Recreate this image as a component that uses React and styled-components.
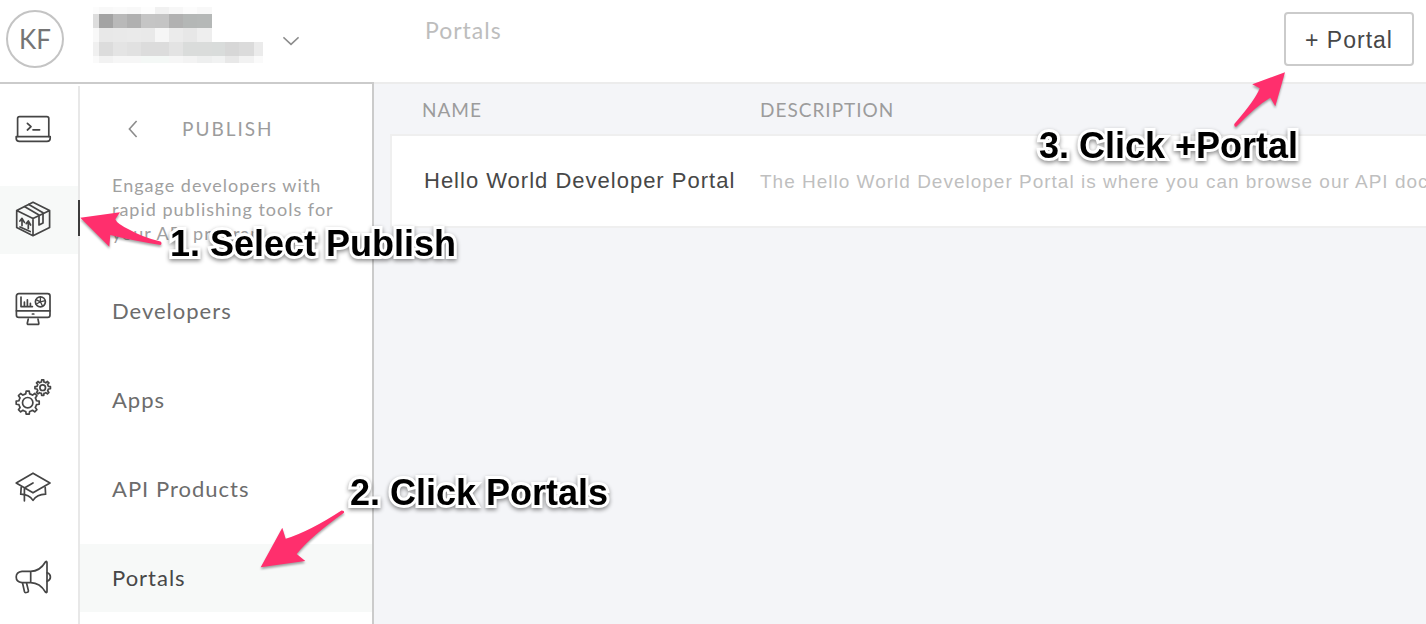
import React from "react";
import styled, { createGlobalStyle } from "styled-components";

const GlobalStyle = createGlobalStyle`
  *, *::before, *::after { box-sizing: border-box; }
  body {
    margin: 0;
    background: #f4f5f8;
    font-family: Lato, "Liberation Sans", sans-serif;
    color: #474747;
  }
  button { font: inherit; color: inherit; background: none; border: 0; padding: 0; cursor: pointer; }
  a { color: inherit; text-decoration: none; }
`;

const Page = styled.div`
  position: relative;
  display: grid;
  grid-template-columns: 374px minmax(0, 1fr);
  grid-template-rows: 84px 1fr;
  min-height: 100vh;
  overflow: hidden;
`;

const AccountBar = styled.header`
  display: flex;
  align-items: flex-start;
  padding: 7px 6px;
  background: #fff;
  border-bottom: 2px solid #cbcbcb;
`;

const Avatar = styled.div`
  display: flex;
  align-items: center;
  justify-content: center;
  width: 58px;
  height: 58px;
  margin-top: 3px;
  border: 2px solid #c4c4c4;
  border-radius: 50%;
  font-size: 26px;
  color: #757575;
`;

const AccountButton = styled.button`
  display: flex;
  align-items: center;
  gap: 20px;
  margin-left: 29px;
  height: 56px;
`;

const DownChevron = styled.svg`
  margin-top: 12px;
`;

const TopBar = styled.header`
  display: flex;
  align-items: flex-start;
  justify-content: space-between;
  padding: 12px 12px 0 51px;
  background: #fff;
  border-bottom: 2px solid #ececec;
`;

const PageTitle = styled.h1`
  margin: 0;
  font-size: 23px;
  line-height: 36px;
  font-weight: 400;
  letter-spacing: 1px;
  color: #bdbdbd;
`;

const AddButton = styled.button`
  height: 54px;
  width: 130px;
  padding-top: 2px;
  border: 2px solid #cbcbcb;
  border-radius: 4px;
  background: #fff;
  font-family: "Liberation Sans", sans-serif;
  font-size: 23px;
  letter-spacing: 1px;
  color: #474747;
`;

const Sidebar = styled.aside`
  display: grid;
  grid-template-columns: 80px 1fr;
  background: #fff;
  border-right: 2px solid #cbcbcb;
`;

const Rail = styled.nav`
  display: flex;
  flex-direction: column;
  gap: 21px;
  margin-top: 2px;
  padding-top: 11px;
  border-right: 2px solid #e8e8e8;
`;

const RailLink = styled.a`
  position: relative;
  display: flex;
  align-items: center;
  height: 68px;
  padding-left: 15px;
  background: ${(p) => (p.$active ? "#f7f9f8" : "transparent")};

  &::after {
    content: "";
    display: ${(p) => (p.$active ? "block" : "none")};
    position: absolute;
    right: -2px;
    top: 14px;
    width: 2px;
    height: 36px;
    background: #3c3c3c;
  }
`;

const Icon = styled.svg`
  width: 36px;
  height: 36px;
  overflow: visible;
  fill: none;
  stroke: #454545;
  stroke-width: 1.7;
  stroke-linecap: round;
  stroke-linejoin: round;
`;

const SubPanel = styled.section`
  display: flex;
  flex-direction: column;
`;

const SubHeader = styled.div`
  display: flex;
  align-items: center;
  gap: 44px;
  height: 89px;
  padding-left: 48px;
`;

const BackButton = styled.button`
  display: flex;
`;

const SubTitle = styled.h2`
  margin: 0;
  font-size: 19px;
  font-weight: 400;
  letter-spacing: 2px;
  color: #9c9c9c;
`;

const SubText = styled.p`
  margin: 0;
  padding: 0 32px;
  font-size: 18px;
  line-height: 24px;
  letter-spacing: 1px;
  color: #a0a0a0;
`;

const Menu = styled.nav`
  display: flex;
  flex-direction: column;
  gap: 21px;
  margin-top: 32px;
`;

const MenuLink = styled.a`
  display: flex;
  align-items: center;
  height: 68px;
  padding: 0 0 2px 32px;
  font-size: 22px;
  letter-spacing: 1px;
  color: ${(p) => (p.$active ? "#474747" : "#6c6c6c")};
  background: ${(p) => (p.$active ? "#f7f9f8" : "transparent")};
`;

const Main = styled.main`
  padding-left: 16px;
  overflow: hidden;
`;

const Table = styled.table`
  width: 100%;
  border-collapse: separate;
  border-spacing: 0;
  table-layout: fixed;
  white-space: nowrap;
`;

const HeadCell = styled.th`
  width: ${(p) => p.$width || "auto"};
  height: 50px;
  padding: ${(p) => (p.$first ? "0 0 0 32px" : "0")};
  text-align: left;
  font-size: 19px;
  font-weight: 400;
  letter-spacing: 1px;
  color: #9c9c9c;
`;

const Cell = styled.td`
  height: 94px;
  padding: 2px 0 0;
  background: #fff;
  border: solid #efefef;
  border-width: 2px 0;
  font-family: "Liberation Sans", sans-serif;
  font-size: 19px;
  letter-spacing: 1px;
  color: #bfbfbf;
`;

const NameCell = styled(Cell)`
  padding: 0 0 0 32px;
  border-left-width: 2px;
  font-size: 22px;
  color: #474747;
`;

const Callout = styled.div`
  position: absolute;
  top: ${(p) => p.$top}px;
  left: ${(p) => p.$left};
  right: ${(p) => p.$right};
  font-family: "Liberation Sans", sans-serif;
  font-size: 36px;
  line-height: 40px;
  font-weight: 700;
  white-space: nowrap;
  color: #000;
  -webkit-text-stroke: 6px #fff;
  stroke-linejoin: round;
  paint-order: stroke fill;
  filter: drop-shadow(0 2px 2px rgba(0, 0, 0, 0.45));
  pointer-events: none;
`;

const Arrow = styled.svg`
  position: absolute;
  top: ${(p) => p.$top}px;
  left: ${(p) => p.$left};
  right: ${(p) => p.$right};
  overflow: visible;
  fill: #ff2f6d;
  filter: drop-shadow(0 2px 1px rgba(0, 0, 0, 0.35));
  pointer-events: none;
`;

const xs = [0, 6, 20, 34, 48, 62, 76, 90, 104, 119, 132, 146, 161, 170];
const mosaicRows = [
  { y: 0, h: 7, c: ["fcfcfc", "f8f8f8", "fafafa", "f8f8f8", "fdfdfd", "f1f1f1", "f7f7f7", "fcfcfc", "f8f8f8"] },
  { y: 7, h: 14, c: ["dddddd", "a3a3a3", "b9b9b9", "b0b0b0", "c5c5c5", "c4c4c4", "b1b1b1", "b4b7b6", "b5b8b7"] },
  { y: 21, h: 14, c: ["f8f8f8", "e8e8e8", "e9e9e9", "eaeaea", "e9e9e9", "f6f6f6", "ebebeb", "e7e7e7", "eeeeee"] },
  { y: 35, h: 14, c: ["f0f0f0", "dcdcdc", "e4e4e4", "e1e1e1", "dcdcdc", "dcdcdc", "e3e3e3", "dadcdb", "dadcdb", "d9dcdb", "d7d7d7", "dbdbdb", "ebebeb"] },
  { y: 49, h: 7, c: ["fafafa", "f2f2f2", "f6f6f6", "f6f6f6", "f4f8f6", "f4f8f6", "f6f6f6", "f3f3f3", "eeefef", "f1f2f2", "e8e8e8", "f2f2f2", "fafafa"] },
];

function Mosaic() {
  return (
    <svg width="170" height="56" shapeRendering="crispEdges" aria-hidden="true">
      {mosaicRows.map((row) =>
        row.c.map((c, i) => (
          <rect key={`${row.y}-${i}`} x={xs[i]} y={row.y} width={xs[i + 1] - xs[i]} height={row.h} fill={`#${c}`} />
        ))
      )}
    </svg>
  );
}

function gearPath(cx, cy, inner, outer, teeth) {
  const step = (Math.PI * 2) / teeth;
  const at = (r, a) => `${(cx + r * Math.cos(a)).toFixed(2)} ${(cy + r * Math.sin(a)).toFixed(2)}`;
  let d = "";
  for (let i = 0; i < teeth; i++) {
    const a = i * step - Math.PI / 2;
    d += `${i ? "L" : "M"}${at(inner, a - step * 0.28)}L${at(outer, a - step * 0.17)}`;
    d += `L${at(outer, a + step * 0.17)}L${at(inner, a + step * 0.28)}`;
    d += `A${inner} ${inner} 0 0 1 ${at(inner, a + step * 0.72)}`;
  }
  return `${d}Z`;
}

const railItems = [
  {
    label: "Develop",
    art: (
      <>
        <path d="M2.6 23.4V5.6Q2.6 3.6 4.6 3.6H31.8Q33.8 3.6 33.8 5.6V23.4" />
        <path d="M1.2 23.6H35.2V25.2Q35.2 28.4 32 28.4H4.4Q1.2 28.4 1.2 25.2Z" />
        <path d="M12.4 10.4L16 13.7L12.4 17M18 16.8H24.6" />
      </>
    ),
  },
  {
    label: "Publish",
    active: true,
    art: (
      <>
        <path d="M18 .3L34.6 8.6V25.6L18 33.7L1.7 25.6V8.6ZM1.7 8.6L18 16.4L34.6 8.6M18 16.4V33.7" />
        <path d="M9.8 4.7L24 13V23L28 21V10.8L13.8 2.4" />
        <path d="M4.9 19L7 16.4L9.4 20.4M7 16.6V23.6M11.2 21.6L13.3 19L15.6 23M13.3 19.2V26.4M5 25L15.2 29.6" />
      </>
    ),
  },
  {
    label: "Analyze",
    art: (
      <>
        <rect x="1.4" y="2.6" width="33.6" height="23.8" rx="2.4" />
        <path d="M1.4 19.8H35M17.4 23H18.8M13.2 28.2L12.3 32.2Q12.2 33.4 13.4 33.4H22.8Q24 33.4 23.8 32.2L23 28.2" />
        <path d="M6 6V15.6H17.4M9.4 15.4V11.2M12.4 15.4V8.8M15.4 15.4V12.4" />
        <circle cx="25.4" cy="10.8" r="5" />
        <path d="M25.4 5.8V10.8L21 13.2M25.4 10.8L30.2 9.6M25.4 10.8L27.6 15.2M21 8.6L25.4 10.8" strokeWidth="1.3" />
      </>
    ),
  },
  {
    label: "Admin",
    art: (
      <>
        <path d={gearPath(12.7, 22.7, 9, 11.6, 8)} />
        <circle cx="12.7" cy="22.7" r="5.2" />
        <path d={gearPath(27.7, 7.7, 5.8, 7.8, 8)} />
        <circle cx="27.7" cy="7.7" r="2.8" />
      </>
    ),
  },
  {
    label: "Learn",
    art: (
      <>
        <path d="M18 4.2L35 14L18 23.8L1.2 14ZM18 14L9.4 19V31.8" />
        <path d="M6.2 18.4L5.7 25.2Q14 25.4 18 31.4Q22 25.4 30.6 25.2L30.2 18.4" />
      </>
    ),
  },
  {
    label: "Announcements",
    art: (
      <>
        <path d="M15.7 13.4H7Q1.2 14 1.2 19T7 24.7H15.7ZM15.7 13.4Q25 13.2 30.4 4Q32 2.6 32 4.6V33.4Q32 35.4 30.4 34Q25 25 15.7 24.7" />
        <path d="M32.2 14.8Q35.4 16 35.4 19T32.2 23.3M7.6 25.2L9.4 33.4Q9.8 34.8 11.2 34.5L12.4 34.2Q13.7 33.8 13.4 32.6L11.6 25.2" />
      </>
    ),
  },
];

const menuItems = ["Developers", "Apps", "API Products", "Portals"];

export default function App() {
  return (
    <>
      <GlobalStyle />
      <Page>
        <AccountBar>
          <Avatar>KF</Avatar>
          <AccountButton type="button" aria-label="Switch organization">
            <Mosaic />
            <DownChevron width="16" height="10" viewBox="0 0 16 10" fill="none" stroke="#8c8c8c" strokeWidth="1.6" aria-hidden="true">
              <path d="M.4 1.4L8 8.4L15.6 1.4" />
            </DownChevron>
          </AccountButton>
        </AccountBar>
        <TopBar>
          <PageTitle>Portals</PageTitle>
          <AddButton type="button">+ Portal</AddButton>
        </TopBar>

        <Sidebar>
          <Rail aria-label="Sections">
            {railItems.map((item) => (
              <RailLink key={item.label} href="#" aria-label={item.label} $active={item.active}>
                <Icon viewBox="0 0 36 36" aria-hidden="true">{item.art}</Icon>
              </RailLink>
            ))}
          </Rail>
          <SubPanel>
            <SubHeader>
              <BackButton type="button" aria-label="Back">
                <svg width="10" height="18" viewBox="0 0 10 18" fill="none" stroke="#8c8c8c" strokeWidth="1.6" aria-hidden="true">
                  <path d="M8.6 1L1.4 9L8.6 17" />
                </svg>
              </BackButton>
              <SubTitle>PUBLISH</SubTitle>
            </SubHeader>
            <SubText>Engage developers with rapid publishing tools for your API program.</SubText>
            <Menu aria-label="Publish">
              {menuItems.map((label) => (
                <MenuLink key={label} href="#" $active={label === "Portals"}>{label}</MenuLink>
              ))}
            </Menu>
          </SubPanel>
        </Sidebar>

        <Main>
          <Table>
            <thead>
              <tr>
                <HeadCell $first $width="370px">NAME</HeadCell>
                <HeadCell>DESCRIPTION</HeadCell>
              </tr>
            </thead>
            <tbody>
              <tr>
                <NameCell>Hello World Developer Portal</NameCell>
                <Cell>The Hello World Developer Portal is where you can browse our API documentation</Cell>
              </tr>
            </tbody>
          </Table>
        </Main>

        <Arrow $top={212} $left="80px" width="82" height="35" viewBox="0 0 82 35" aria-hidden="true">
          <path d="M.3 5.7L40 .3L35.3 7.3Q37 12 50 18Q62 25 80.5 29.6Q82.5 31 80.5 33Q50 28 30.3 23L29.3 34.7Z" />
        </Arrow>
        <Callout $top={224} $left="170px">1. Select Publish</Callout>
        <Arrow $top={510} $left="260px" width="85" height="58" viewBox="0 0 85 58" aria-hidden="true">
          <path d="M.7 57.3L22.3 17.7L25.7 28.7Q50 21 81.5 .4Q84.5 .4 84 2.7Q50 27 36.7 44L45.3 51Z" />
        </Arrow>
        <Callout $top={473} $left="350px">2. Click Portals</Callout>
        <Arrow $top={72} $right="140px" width="52" height="56" viewBox="0 0 52 56" aria-hidden="true">
          <path d="M51 .3L18.3 12.3L25.7 16.3Q22 27 .3 52Q0 55.5 2.5 54.6Q22 34 36.3 25.7L41.3 34.3Z" />
        </Arrow>
        <Callout $top={126} $right="128px">3. Click +Portal</Callout>
      </Page>
    </>
  );
}
